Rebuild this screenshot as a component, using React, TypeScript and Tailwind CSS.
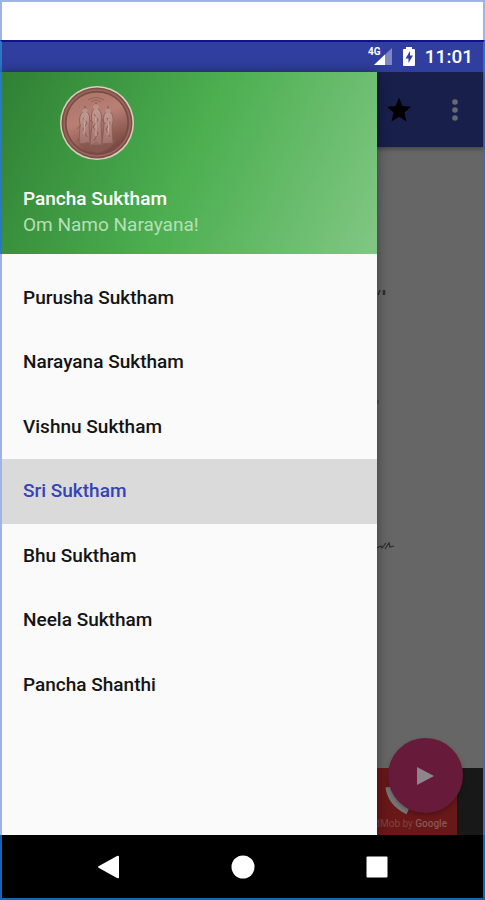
import React from "react";

const items = [
  "Purusha Suktham",
  "Narayana Suktham",
  "Vishnu Suktham",
  "Sri Suktham",
  "Bhu Suktham",
  "Neela Suktham",
  "Pancha Shanthi",
];

function Medallion() {
  return (
    <svg className="ml-9 block size-19" viewBox="0 0 76 76" role="img" aria-label="Medallion with three figures">
      <defs>
        <linearGradient id="copper" x1="0" y1="0" x2="0.4" y2="1">
          <stop offset="0" stopColor="#a87468" />
          <stop offset="0.5" stopColor="#b97f74" />
          <stop offset="1" stopColor="#7d4b45" />
        </linearGradient>
        <linearGradient id="robe" x1="0" y1="0" x2="0" y2="1">
          <stop offset="0" stopColor="#c8a29b" />
          <stop offset="1" stopColor="#a0716a" />
        </linearGradient>
      </defs>
      <circle cx="38" cy="38" r="37" fill="#d8cfbd" />
      <circle cx="38" cy="38" r="35.5" fill="#805048" />
      <circle cx="38" cy="38" r="33" fill="none" stroke="#98675e" strokeWidth="1.5" />
      <circle cx="38" cy="38" r="31" fill="url(#copper)" stroke="#75483f" strokeWidth="1" />
      <path d="M18 54Q38 49 58 54Q54 64 38 68Q22 64 18 54Z" fill="#875850" />
      <path d="M29 15Q37 10 45 15M32 17Q37 13 42 17" fill="none" stroke="#946259" strokeWidth="1" />
      <g stroke="#885a53" strokeWidth="0.8" fill="url(#robe)">
        <path d="M24 27L26 21L28 27Q32 30 30 40L31 58L20 59L21 40Q19 31 24 27Z" />
        <path d="M35 24L37 17L39 24Q44 27 42 39L43 60L31 60L33 39Q31 28 35 24Z" />
        <path d="M47 27L49 21L51 27Q56 31 53 41L54 58L43 59L45 40Q43 31 47 27Z" />
      </g>
      <g fill="#b99389">
        <circle cx="26" cy="26" r="2.6" />
        <circle cx="37" cy="22" r="2.8" />
        <circle cx="49" cy="26" r="2.6" />
      </g>
      <path
        d="M24 33L28 38L24 44L28 52M35 29L39 35L34 42L39 48L35 56M48 33L51 38L47 44L51 52M22 40L18 44M43 34L46 39M31 35L34 38M24 61L28 57L32 62L37 57L42 62L47 58L51 61"
        fill="none"
        stroke="#8a5d56"
        strokeWidth="1"
      />
      <path d="M26 33L25 49M37 31L37 51M50 34L49 50" fill="none" stroke="#d0aaa1" strokeWidth="1" />
    </svg>
  );
}

function StatusBar() {
  return (
    <header className="flex h-8 shrink-0 items-center justify-end border-x-2 border-t-2 border-x-[#2878c8] border-t-[#10128a] bg-[#303f9f] pr-2.5 text-white">
      <svg className="mr-2 h-6 w-7" viewBox="0 0 28 24" role="img" aria-label="4G signal">
        <path d="M27 3V20H9Z" fill="#7e87c4" />
        <path d="M20 9.6V20H9Z" fill="#fff" />
        <text x="3" y="10" fontFamily="Roboto, sans-serif" fontSize="10" fontWeight="700" fill="#fff" stroke="#303f9f" strokeWidth="2" paintOrder="stroke">
          4G
        </text>
      </svg>
      <svg className="mr-2 h-5 w-4" viewBox="0 0 16 20" role="img" aria-label="Battery charging">
        <path d="M5 0H11V2H13Q14 2 14 3V18Q14 19 13 19H3Q2 19 2 18V3Q2 2 3 2H5Z" fill="#fff" />
        <path d="M9 4L4.5 11.5H7.5V16L12 8.5H9Z" fill="#303f9f" />
      </svg>
      <time className="text-[19px] leading-6 font-medium">11:01</time>
    </header>
  );
}

function ReaderPage() {
  return (
    <div className="col-start-1 row-start-1 flex min-w-0 flex-col border-r-2 border-[#3470b0] bg-[#666]">
      <div className="flex h-[75px] items-center justify-end bg-[#181f4a] shadow-[0_2px_4px_#444]">
        <button aria-label="Favourite" className="flex w-14 justify-center">
          <svg className="size-7" viewBox="0 0 28 28" fill="#000">
            <path d="M14 1.5L17.4 10L26 10.7L19.4 16.5L21.5 25.5L14 20.7L6.5 25.5L8.6 16.5L2 10.7L10.6 10Z" />
          </svg>
        </button>
        <button aria-label="More options" className="flex w-14 justify-center">
          <svg className="h-6 w-2" viewBox="0 0 8 24" fill="#666b70">
            <circle cx="4" cy="4" r="2.8" />
            <circle cx="4" cy="12" r="2.8" />
            <circle cx="4" cy="20" r="2.8" />
          </svg>
        </button>
      </div>
      <svg className="ml-[377px] h-[420px] w-5" viewBox="0 0 20 420" fill="none" stroke="#2c2c2c" aria-hidden="true">
        <path d="M1 148L3 143" strokeWidth="1.5" />
        <path d="M7 143V148" strokeWidth="2.5" />
        <path d="M1 253V257" stroke="#505050" strokeWidth="2" />
        <path d="M0 401L4 399L5 401L9 396M8 402L12 396L13 400L17 399" strokeWidth="1.2" />
      </svg>
      <div className="relative mt-auto flex h-[67px] bg-[#181818]">
        <div className="flex w-[457px] items-end justify-end overflow-hidden bg-[#681819] pr-2.5 pb-[3px]">
          <span className="text-[10px] leading-4 whitespace-nowrap text-[#824240]">
            AdMob by <span className="font-medium text-[#8c5552]">Google</span>
          </span>
        </div>
        <svg className="absolute right-[63px] bottom-5 h-8 w-9" viewBox="0 0 36 32" fill="none" aria-hidden="true">
          <path d="M5 4Q7 20 24 28" stroke="#777" strokeWidth="7" />
        </svg>
        <button
          aria-label="Play"
          className="absolute right-5 bottom-[22px] flex size-[75px] items-center justify-center rounded-full bg-[#671a39] shadow-[0_2px_4px_#0004]"
        >
          <svg className="size-5" viewBox="0 0 20 20" fill="#8d858a">
            <path d="M1 1V19L18 10Z" />
          </svg>
        </button>
      </div>
    </div>
  );
}

function Drawer() {
  return (
    <aside className="z-10 col-start-1 row-start-1 w-[377px] max-w-full bg-[#fafafa] shadow-[0_0_12px_#0006]">
      <div className="flex h-[182px] flex-col border-l-2 border-[#2878c8] bg-[linear-gradient(114deg,#2f8033,#4caf50_50%,#81c784)] px-[21px] pt-[13px]">
        <Medallion />
        <h1 className="mt-[25px] text-[19px] leading-[26px] font-medium text-white">Pancha Suktham</h1>
        <p className="text-[19px] leading-[26px] text-[#b7dfb8]">Om Namo Narayana!</p>
      </div>
      <nav className="border-l-2 border-[#9db4e8] pt-3 pb-[118px]" aria-label="Sukthams">
        <ul className="grid h-[451px] grid-rows-7">
          {items.map((item) => (
            <li key={item} className="flex">
              <a
                href="#"
                aria-current={item === "Sri Suktham" ? "page" : undefined}
                className="flex w-full items-center px-[21px] text-[19px] font-medium text-[#141414] aria-[current=page]:bg-[#dadada] aria-[current=page]:text-[#3543b5]"
              >
                {item}
              </a>
            </li>
          ))}
        </ul>
      </nav>
    </aside>
  );
}

export default function App() {
  return (
    <div className="flex min-h-screen flex-col font-[Roboto,sans-serif]">
      <div className="h-10 shrink-0 border-x-2 border-t-2 border-[#9db4e8] bg-white" />
      <StatusBar />
      <main className="grid flex-1 grid-cols-1">
        <ReaderPage />
        <Drawer />
      </main>
      <footer className="flex h-[65px] shrink-0 items-center justify-center gap-[110px] border-x-2 border-b-2 border-[#1068b8] bg-black">
        <button aria-label="Back">
          <svg className="size-6" viewBox="0 0 24 24" fill="#fff">
            <path d="M2 11L20 1Q22 0 22 2V22Q22 24 20 23L2 13Q0 12 2 11Z" />
          </svg>
        </button>
        <button aria-label="Home">
          <svg className="size-6" viewBox="0 0 24 24" fill="#fff">
            <circle cx="12" cy="12" r="11.5" />
          </svg>
        </button>
        <button aria-label="Recent apps">
          <svg className="size-6" viewBox="0 0 24 24" fill="#fff">
            <rect x="1.5" y="1.5" width="21" height="21" rx="1" />
          </svg>
        </button>
      </footer>
    </div>
  );
}
